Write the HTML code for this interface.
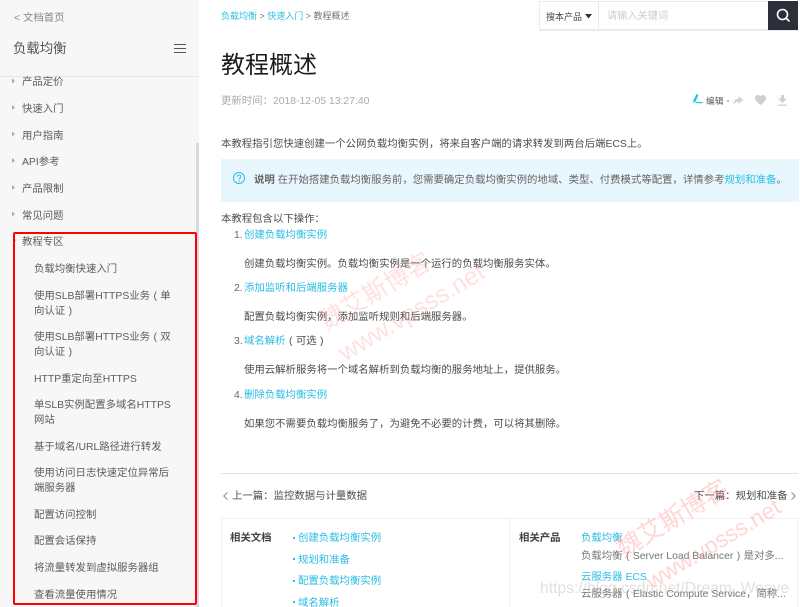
<!DOCTYPE html>
<html lang="zh">
<head>
<meta charset="utf-8">
<style>
html,body{margin:0;padding:0;background:#fff}
#p{position:relative;width:800px;height:607px;overflow:hidden;background:#fff;font-family:"Liberation Sans","Noto Sans CJK SC",sans-serif;font-size:10.4px;color:#4d4d4d}
#p div{position:absolute;white-space:nowrap}
#b{left:0;top:0;width:800px;height:607px;filter:blur(.3px)}
.t{line-height:14px;height:14px;margin-top:2px}
.l{color:#2bbde4}
.n{color:#666}
.s{color:#5c5c5c}
i{font-style:normal;font-family:"Liberation Sans","Noto Sans CJK TC",sans-serif}
i.p{font-family:"Liberation Sans",sans-serif;padding:0 3.4px}
svg{position:absolute;overflow:visible}
.w{color:#ff8080;transform-origin:0 50%;line-height:24px;font-size:25px;transform:rotate(-31deg)}
</style>
</head>
<body>
<div id="p">
<div id="b">
<!-- sidebar -->
<div style="left:0;top:0;width:199px;height:607px;background:#f7f7f7"></div>
<div style="left:0;top:76px;width:199px;height:1px;background:#e6e6e6"></div>
<div style="left:196px;top:143px;width:3px;height:464px;background:#d5dbe0"></div>
<div class="t" style="left:14px;top:10px;color:#888">&lt; 文档首页</div>
<div style="left:13px;top:39px;font-size:13.4px;line-height:20px;color:#555">负载均衡</div>
<div style="left:174px;top:44px;width:12px;height:1px;background:#555"></div>
<div style="left:174px;top:48px;width:12px;height:1px;background:#555"></div>
<div style="left:174px;top:52px;width:12px;height:1px;background:#555"></div>

<svg style="left:0;top:0" width="20" height="245"><g fill="#aaa"><path d="M12 78.500l3 2.500-3 2.500z"/><path d="M12 105l3 2.500-3 2.500z"/><path d="M12 131.500l3 2.500-3 2.500z"/><path d="M12 158l3 2.500-3 2.500z"/><path d="M12 185l3 2.500-3 2.500z"/><path d="M12 211.500l3 2.500-3 2.500z"/><path d="M12 239.500h5l-2.500 3z" fill="#ccc"/></g></svg>

<div class="t s" style="left:22px;top:74px">产品定价</div>
<div class="t s" style="left:22px;top:101px">快速入门</div>
<div class="t s" style="left:22px;top:128px">用户指南</div>
<div class="t s" style="left:22px;top:154px">API参考</div>
<div class="t s" style="left:22px;top:181px">产品限制</div>
<div class="t s" style="left:22px;top:208px">常见问题</div>
<div class="t s" style="left:22px;top:234px">教程专区</div>
<div class="t s" style="left:34px;top:261px">负载均衡快速入门</div>
<div class="t s" style="left:34px;top:288px">使用SLB部署HTTPS业务<i class="p">(</i>单</div>
<div class="t s" style="left:34px;top:303px">向认证<i class="p">)</i></div>
<div class="t s" style="left:34px;top:329px">使用SLB部署HTTPS业务<i class="p">(</i>双</div>
<div class="t s" style="left:34px;top:344px">向认证<i class="p">)</i></div>
<div class="t s" style="left:34px;top:371px">HTTP重定向至HTTPS</div>
<div class="t s" style="left:34px;top:397px">单SLB实例配置多域名HTTPS</div>
<div class="t s" style="left:34px;top:412px">网站</div>
<div class="t s" style="left:34px;top:439px">基于域名/URL路径进行转发</div>
<div class="t s" style="left:34px;top:465px">使用访问日志快速定位异常后</div>
<div class="t s" style="left:34px;top:480px">端服务器</div>
<div class="t s" style="left:34px;top:507px">配置访问控制</div>
<div class="t s" style="left:34px;top:533px">配置会话保持</div>
<div class="t s" style="left:34px;top:560px">将流量转发到虚拟服务器组</div>
<div class="t s" style="left:34px;top:587px">查看流量使用情况</div>

<!-- breadcrumb -->
<div class="t" style="left:221px;top:7px;color:#777;font-size:9px"><span class="l">负载均衡</span> &gt; <span class="l">快速入门</span> &gt; 教程概述</div>

<!-- search -->
<div style="left:539px;top:1px;width:257px;height:27px;border:1px solid #e8ecec;border-bottom-width:2px;background:#fff"></div>
<div style="left:598px;top:1px;width:1px;height:29px;background:#e8ecec"></div>
<div class="t" style="left:546px;top:8px;color:#444;font-size:9px">搜本产品</div>
<svg style="left:585px;top:14px" width="8" height="5"><path d="M0 0h7L3.500 4.500z" fill="#333"/></svg>
<div class="t" style="left:607px;top:8px;color:#ccc;font-size:10.2px">请输入关键词</div>
<div style="left:768px;top:1px;width:30px;height:29px;background:#2b2f3a"></div>
<svg style="left:776px;top:8px" width="15" height="15" fill="none" stroke="#fff" stroke-width="1.600"><circle cx="6.500" cy="6.500" r="5"/><path d="M10 10l3.500 3.500"/></svg>

<!-- title -->
<div style="left:221px;top:50px;font-size:24px;line-height:32px;color:#1c1c1c">教程概述</div>
<div class="t" style="left:221px;top:93px;color:#aaa">更新时间<i>：</i>2018-12-05 13:27:40</div>

<svg style="left:693px;top:94px" width="10" height="10"><path d="M1.200 7.500L4.500 .5" stroke="#1cc4e8" stroke-width="2.400" fill="none"/><path d="M2.500 8.600h7" stroke="#1cc4e8" stroke-width="1.200"/><path d="M0 9.200l.3-2 1.500.7z" fill="#1cc4e8"/></svg>
<div class="t" style="left:706px;top:91.500px;color:#555;font-size:8.700px">编辑</div>
<div style="left:727px;top:100px;width:1.500px;height:1.500px;background:#bbb"></div>
<svg style="left:733px;top:95.500px" width="11" height="9"><path d="M5.500 0L10.500 4 5.500 8V5.800C3.200 5.800 1.500 7 0 9 .5 5.200 2.500 2.800 5.500 2.400z" fill="#d4d4d4"/></svg>
<svg style="left:755px;top:95px" width="11" height="10"><path d="M5.500 10C2 7.200 0 5.300 0 3 0 1.200 1.300 0 2.900 0 4 0 4.900.6 5.500 1.400 6.100.6 7 0 8.100 0 9.700 0 11 1.200 11 3c0 2.300-2 4.200-5.500 7z" fill="#cfcfcf"/></svg>
<svg style="left:778px;top:95px" width="10" height="11"><path d="M3 0h3v3.500h3L4.500 8 0 3.500h3z" fill="#cfcfcf"/><path d="M0 10.200h9" stroke="#cfcfcf" stroke-width="1.300"/></svg>

<!-- content -->
<div class="t" style="left:221px;top:136px">本教程指引您快速创建一个公网负载均衡实例<i>，</i>将来自客户端的请求转发到两台后端ECS上。</div>
<div style="left:221px;top:159px;width:578px;height:43px;background:#e8f7fd"></div>
<svg style="left:233px;top:171.500px" width="12" height="12" fill="none"><circle cx="6" cy="6" r="5.500" stroke="#2dbbe0" stroke-width="1"/><path d="M4.200 4.800c0-2.300 3.700-2.300 3.700-.1 0 1.400-1.900 1.400-1.900 2.600" stroke="#2dbbe0" stroke-width="1"/><circle cx="6" cy="9" r=".7" fill="#2dbbe0"/></svg>
<div class="t" style="left:254px;top:172px;color:#666"><b style="font-weight:700">说明</b> 在开始搭建负载均衡服务前<i>，</i>您需要确定负载均衡实例的地域、类型、付费模式等配置<i>，</i>详情参考<span class="l">规划和准备</span>。</div>

<div class="t" style="left:221px;top:211px">本教程包含以下操作<i>：</i></div>
<div class="t n" style="left:234px;top:227px">1.</div>
<div class="t l" style="left:244px;top:227px">创建负载均衡实例</div>
<div class="t" style="left:244px;top:256px">创建负载均衡实例。负载均衡实例是一个运行的负载均衡服务实体。</div>
<div class="t n" style="left:234px;top:280px">2.</div>
<div class="t l" style="left:244px;top:280px">添加监听和后端服务器</div>
<div class="t" style="left:244px;top:309px">配置负载均衡实例<i>，</i>添加监听规则和后端服务器。</div>
<div class="t n" style="left:234px;top:333px">3.</div>
<div class="t" style="left:244px;top:333px"><span class="l">域名解析</span><i class="p">(</i>可选<i class="p">)</i></div>
<div class="t" style="left:244px;top:362px">使用云解析服务将一个域名解析到负载均衡的服务地址上<i>，</i>提供服务。</div>
<div class="t n" style="left:234px;top:387px">4.</div>
<div class="t l" style="left:244px;top:387px">删除负载均衡实例</div>
<div class="t" style="left:244px;top:416px">如果您不需要负载均衡服务了<i>，</i>为避免不必要的计费<i>，</i>可以将其删除。</div>

<div style="left:221px;top:473px;width:577px;height:1px;background:#e8e2e6"></div>

<svg style="left:223px;top:492px" width="5" height="8" fill="none" stroke="#888"><path d="M4.500 .3L.8 4l3.700 3.700"/></svg>
<div class="t" style="left:232px;top:488px">上一篇<i>：</i>监控数据与计量数据</div>
<div class="t" style="left:694px;top:488px">下一篇<i>：</i>规划和准备</div>
<svg style="left:791px;top:492px" width="5" height="8" fill="none" stroke="#888"><path d="M.5 .3L4.200 4 .5 7.700"/></svg>

<div style="left:221px;top:518px;width:577px;height:100px;border:1px solid #f0f2f2;box-sizing:border-box"></div>
<div style="left:509px;top:518px;width:1px;height:100px;background:#f0f2f2"></div>
<div class="t" style="left:230px;top:530px;color:#444;font-weight:700">相关文档</div>
<div style="left:293px;top:537px;width:2px;height:2px;background:#2dbbe0"></div>
<div class="t l" style="left:298px;top:530px">创建负载均衡实例</div>
<div style="left:293px;top:558px;width:2px;height:2px;background:#2dbbe0"></div>
<div class="t l" style="left:298px;top:552px">规划和准备</div>
<div style="left:293px;top:580px;width:2px;height:2px;background:#2dbbe0"></div>
<div class="t l" style="left:298px;top:573px">配置负载均衡实例</div>
<div style="left:293px;top:601px;width:2px;height:2px;background:#2dbbe0"></div>
<div class="t l" style="left:298px;top:595px">域名解析</div>

<div class="t" style="left:519px;top:530px;color:#444;font-weight:700">相关产品</div>
<div class="t l" style="left:581px;top:530px">负载均衡</div>
<div class="t" style="left:581px;top:548px;color:#777">负载均衡<i class="p">(</i>Server Load Balancer<i class="p">)</i>是对多...</div>
<div class="t l" style="left:581px;top:569px">云服务器 ECS</div>
<div class="t" style="left:581px;top:586px;color:#777">云服务器<i class="p">(</i>Elastic Compute Service<i>，</i>简称...</div>

<!-- watermarks -->
<div class="w" style="left:322px;top:312px;opacity:.24">魏艾斯博客</div>
<div class="w" style="left:341px;top:343px;opacity:.24">www.vpsss.net</div>
<div class="w" style="left:619px;top:539px;opacity:.32">魏艾斯博客</div>
<div class="w" style="left:648px;top:571px;opacity:.32;font-size:23px">www.vpsss.net</div>
<div style="left:540px;top:579px;font-size:15.7px;line-height:20px;color:#888;opacity:.26">https://blog.csdn.net/Dream_Weave</div>
</div>
<div style="left:13px;top:232px;width:180px;height:369px;border:2px solid #f00;border-radius:2px"></div>
</div>
</body>
</html>
